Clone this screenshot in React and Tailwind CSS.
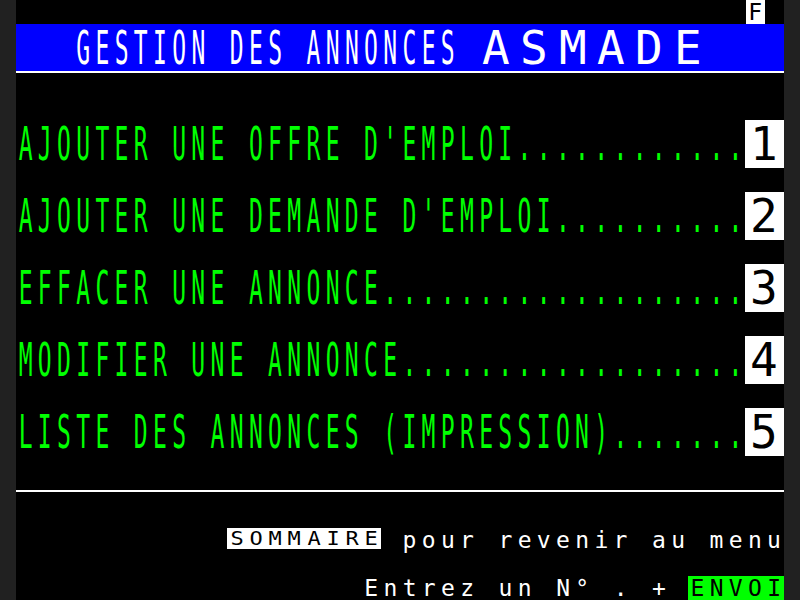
import React from "react";

function Chars({ text, dw = false, dh = false, size = "normal" }) {
  return text.split("").map((c, i) => (
    <span
      key={i}
      className={`flex h-full shrink-0 items-center justify-center ${dw ? "w-[38.4px]" : "w-[19.2px]"}`}
    >
      <span
        className={`block whitespace-pre ${size === "small" ? "text-[20px] leading-[21px] scale-x-110" : "text-[23px] leading-[24px]"} ${
          dw && dh ? "scale-200" : dh ? "scale-y-200" : ""
        }`}
      >
        {c === " " ? "\u00a0" : c}
      </span>
    </span>
  ));
}

const items = [
  ["AJOUTER UNE OFFRE D'EMPLOI", "1"],
  ["AJOUTER UNE DEMANDE D'EMPLOI", "2"],
  ["EFFACER UNE ANNONCE", "3"],
  ["MODIFIER UNE ANNONCE", "4"],
  ["LISTE DES ANNONCES (IMPRESSION)", "5"],
];

export default function App() {
  return (
    <div className="flex h-[600px] w-[800px] justify-center bg-[#212121] font-['DejaVu_Sans_Mono',monospace]">
      <div className="flex h-[600px] w-[768px] flex-col bg-black">
        <div className="flex h-[24px] justify-end pr-[19.2px]">
          <div className="flex h-[24px] bg-white text-black">
            <Chars text="F" />
          </div>
        </div>
        <div className="flex h-[47px] bg-[#0000ff] pl-[57.6px] text-white">
          <Chars text="GESTION DES ANNONCES " dh />
          <Chars text="ASMADE" dw dh />
        </div>
        <div className="h-[2px] bg-white" />
        <div className="h-[47px]" />
        <div className="flex flex-col gap-[24px]">
          {items.map(([label, n]) => (
            <div key={n} className="flex h-[48px] text-[#00ff00]">
              <Chars text={label + ".".repeat(38 - label.length)} dh />
              <div className="flex h-[48px] bg-white text-black">
                <Chars text={n} dw dh />
              </div>
            </div>
          ))}
        </div>
        <div className="h-[34px]" />
        <div className="h-[2px] bg-white" />
        <div className="h-[36px]" />
        <div className="flex h-[24px] pl-[211.2px] text-white">
          <div className="flex h-[21px] bg-white text-black">
            <Chars text="SOMMAIRE" size="small" />
          </div>
          <Chars text=" pour revenir au menu" />
        </div>
        <div className="h-[24px]" />
        <div className="flex h-[24px] pl-[345.6px] text-white">
          <Chars text="Entrez un N° . + " />
          <div className="flex h-[24px] bg-[#00ff00] text-black">
            <Chars text="ENVOI" />
          </div>
        </div>
      </div>
    </div>
  );
}
